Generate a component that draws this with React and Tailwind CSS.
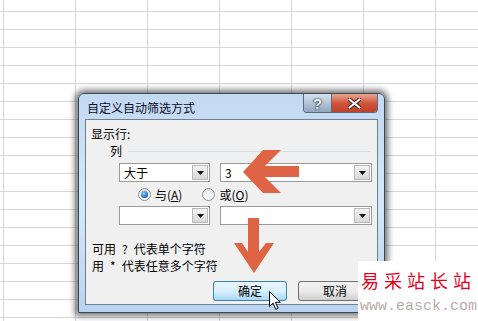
import React from "react";

const cjk = "font-['Noto_Sans_CJK_SC',sans-serif]";

const Combo = ({ width, value }) => (
  <div
    className={`flex h-[19px] items-stretch border border-[#9a9a9a] bg-white ${width}`}
  >
    <div className="flex-1 pl-[4px] text-[12px] leading-[17px] text-black">{value}</div>
    <div className="m-[1px] flex w-[16px] items-center justify-center border border-[#b9b9b9] bg-gradient-to-b from-[#f4f4f4] to-[#d8d8d8]">
      <svg width="7" height="4" viewBox="0 0 7 4">
        <path d="M0 0h7L3.5 4z" fill="#111" />
      </svg>
    </div>
  </div>
);

const Radio = ({ checked }) => (
  <div className="flex h-[13px] w-[13px] items-center justify-center rounded-full border border-[#8c8f94] bg-gradient-to-b from-[#e6e6e6] to-[#fdfdfd]">
    {checked && (
      <div className="h-[7px] w-[7px] rounded-full bg-[radial-gradient(circle_at_40%_35%,#9fd4ff,#1a6fc9_60%,#0b3f86)]" />
    )}
  </div>
);

const App = () => {
  return (
    <div
      className={`relative h-[321px] w-[478px] overflow-hidden bg-white bg-[linear-gradient(to_right,#d6d6d6_1px,transparent_1px),linear-gradient(to_bottom,#d6d6d6_1px,transparent_1px)] bg-[size:72px_18px] bg-[position:3px_11px] ${cjk}`}
    >
      {/* dialog window */}
      <div className="absolute left-[78px] top-[93px] flex h-[220px] w-[307px] flex-col rounded-t-[6px] border border-[#3b4756] bg-gradient-to-b from-[#c2d9f2] via-[#d6e7f9] to-[#b9d3ee] shadow-[0_0_6px_3px_rgba(0,0,0,0.55)]">
        <div className="flex h-[25px] items-start justify-between">
          <div className="pl-[8px] pt-[7px] text-[12px] leading-[13px] text-[#0b0b2a]">
            自定义自动筛选方式
          </div>
          <div className="mr-[6px] flex h-[19px] overflow-hidden rounded-b-[4px] border border-t-0 border-[#5b6a7c]">
            <div className="flex w-[28px] items-center justify-center border-r border-[#5b6a7c] bg-gradient-to-b from-[#d5e1ee] via-[#b4c5d8] to-[#8fa6c0] font-['Liberation_Sans',sans-serif] text-[15px] font-bold leading-none text-white [text-shadow:0_0_1px_#1d2b3a,0_0_1px_#1d2b3a,0_0_2px_#1d2b3a]">
              ?
            </div>
            <div className="flex w-[45px] items-center justify-center bg-gradient-to-b from-[#e8a594] via-[#d0553a] to-[#c0402a]">
              <svg width="13" height="11" viewBox="0 0 13 11">
                <path
                  d="M1.5 1.5l10 8M11.5 1.5l-10 8"
                  stroke="#3a1810"
                  strokeWidth="4"
                  strokeLinecap="round"
                />
                <path
                  d="M1.5 1.5l10 8M11.5 1.5l-10 8"
                  stroke="#fff"
                  strokeWidth="2.2"
                  strokeLinecap="round"
                />
              </svg>
            </div>
          </div>
        </div>

        {/* client area */}
        <div className="mx-[6px] mb-[7px] flex flex-1 flex-col border border-[#6d7f92] bg-[#f0f0f0] text-[12px] leading-[12px] text-black">
          <div className="ml-[5px] mt-[8px]">显示行:</div>
          <div className="ml-[24px] mt-[5px] flex items-center gap-[6px] pr-[6px]">
            <span>列</span>
            <div className="h-[1px] flex-1 bg-[#d5dfe5]" />
          </div>
          <div className="ml-[33px] mt-[6px] flex gap-[10px]">
            <Combo width="w-[91px]" value="大于" />
            <Combo width="w-[152px]" value="3" />
          </div>
          <div className="ml-[52px] mt-[6px] flex h-[13px] items-center">
            <Radio checked />
            <span className="ml-[4px]">
              与(<span className="underline">A</span>)
            </span>
            <div className="ml-[20px]">
              <Radio />
            </div>
            <span className="ml-[4px]">
              或(<span className="underline">O</span>)
            </span>
          </div>
          <div className="ml-[33px] mt-[5px] flex gap-[10px]">
            <Combo width="w-[91px]" value="" />
            <Combo width="w-[152px]" value="" />
          </div>
          <div className="ml-[6px] mt-[15px] leading-[17px]">
            <div>可用{"\u2002"}?{"\u2002"}代表单个字符</div>
            <div>用{"\u2002"}*{"\u2002"}代表任意多个字符</div>
          </div>
          <div className="ml-[127px] mt-[7px] flex gap-[11px]">
            <div className="flex h-[20px] w-[74px] items-center justify-center rounded-[3px] border border-[#3c7fb1] bg-gradient-to-b from-[#eaf6fd] via-[#d9f0fc] to-[#a7d9f5]">
              确定
            </div>
            <div className="flex h-[20px] w-[74px] items-center justify-center rounded-[3px] border border-[#707070] bg-gradient-to-b from-[#f2f2f2] via-[#ebebeb] to-[#cfcfcf]">
              取消
            </div>
          </div>
        </div>
      </div>

      {/* left arrow */}
      <svg className="absolute left-[243px] top-[150px]" width="57" height="44" viewBox="0 0 57 44">
        <path d="M0 22L20 0h18L22 16h34v11H22l16 16H20z" fill="#df6446" />
      </svg>

      {/* down arrow */}
      <svg className="absolute left-[234px] top-[218px]" width="40" height="56" viewBox="0 0 40 56">
        <path d="M14 0h11v34l7-9h8L20 55 0 25h8l6 9z" fill="#df6446" />
      </svg>

      {/* mouse cursor */}
      <svg className="absolute left-[269px] top-[291px]" width="13" height="20" viewBox="0 0 13 20">
        <path
          d="M0.5 0.5v15l3.6-3.4 2.6 6.2 2.4-1-2.6-6h4.8z"
          fill="#fff"
          stroke="#000"
          strokeWidth="1"
          strokeLinejoin="round"
        />
      </svg>

      {/* watermark */}
      <div className="absolute left-[358px] top-[261px] flex h-[60px] w-[120px] flex-col bg-white">
        <div className="mt-[9px] pl-[3px] text-[18px] leading-[20px] tracking-[5px] text-[#e8001a]">
          易采站长站
        </div>
        <div className="mt-[10px] pl-[2px] font-['Liberation_Mono',monospace] text-[15px] leading-[14px] text-[#b9abab]">
          www.easck.com
        </div>
      </div>
    </div>
  );
};

export default App;
